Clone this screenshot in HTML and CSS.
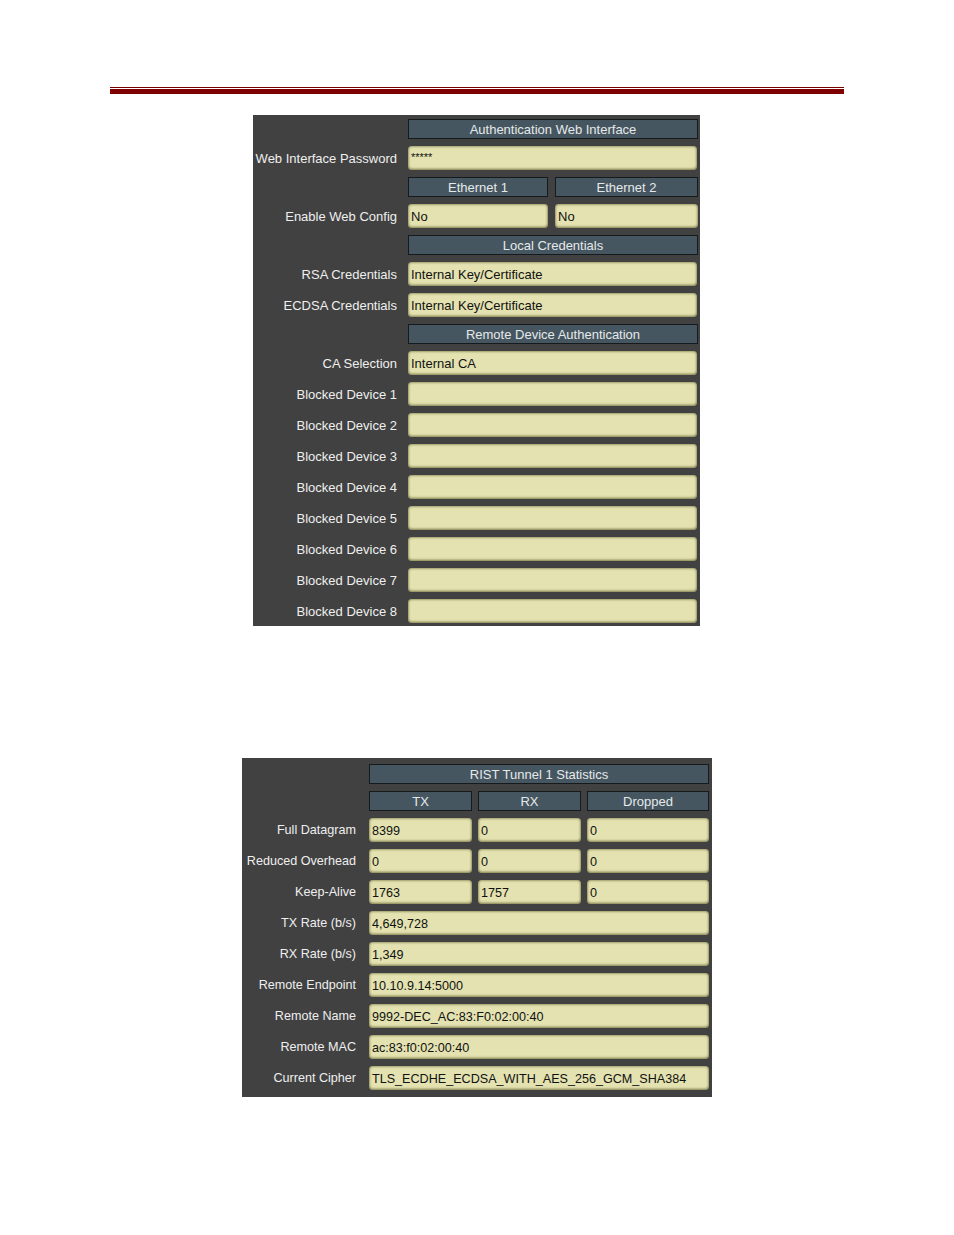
FILE: index.html
```html
<!DOCTYPE html>
<html>
<head>
  <meta charset="utf-8">
  <link rel="stylesheet" href="styles.css">
</head>
<body>
  <div class="rule">
    <div class="rule-thin"></div>
    <div class="rule-thick"></div>
  </div>

  <div class="panel auth">
    <div class="bar wide">Authentication Web Interface</div>

    <div class="label">Web Interface Password</div>
    <div class="field wide pw">*****</div>

    <div class="bar first">Ethernet 1</div>
    <div class="bar">Ethernet 2</div>

    <div class="label">Enable Web Config</div>
    <div class="field">No</div>
    <div class="field">No</div>

    <div class="bar wide">Local Credentials</div>

    <div class="label">RSA Credentials</div>
    <div class="field wide">Internal Key/Certificate</div>
    <div class="label">ECDSA Credentials</div>
    <div class="field wide">Internal Key/Certificate</div>

    <div class="bar wide">Remote Device Authentication</div>

    <div class="label">CA Selection</div>
    <div class="field wide">Internal CA</div>
    <div class="label">Blocked Device 1</div>
    <div class="field wide"></div>
    <div class="label">Blocked Device 2</div>
    <div class="field wide"></div>
    <div class="label">Blocked Device 3</div>
    <div class="field wide"></div>
    <div class="label">Blocked Device 4</div>
    <div class="field wide"></div>
    <div class="label">Blocked Device 5</div>
    <div class="field wide"></div>
    <div class="label">Blocked Device 6</div>
    <div class="field wide"></div>
    <div class="label">Blocked Device 7</div>
    <div class="field wide"></div>
    <div class="label">Blocked Device 8</div>
    <div class="field wide"></div>
  </div>

  <div class="panel stats">
    <div class="bar wide">RIST Tunnel 1 Statistics</div>

    <div class="bar first">TX</div>
    <div class="bar">RX</div>
    <div class="bar">Dropped</div>

    <div class="label">Full Datagram</div>
    <div class="field">8399</div>
    <div class="field">0</div>
    <div class="field">0</div>

    <div class="label">Reduced Overhead</div>
    <div class="field">0</div>
    <div class="field">0</div>
    <div class="field">0</div>

    <div class="label">Keep-Alive</div>
    <div class="field">1763</div>
    <div class="field">1757</div>
    <div class="field">0</div>

    <div class="label">TX Rate (b/s)</div>
    <div class="field wide">4,649,728</div>
    <div class="label">RX Rate (b/s)</div>
    <div class="field wide">1,349</div>
    <div class="label">Remote Endpoint</div>
    <div class="field wide">10.10.9.14:5000</div>
    <div class="label">Remote Name</div>
    <div class="field wide">9992-DEC_AC:83:F0:02:00:40</div>
    <div class="label">Remote MAC</div>
    <div class="field wide">ac:83:f0:02:00:40</div>
    <div class="label">Current Cipher</div>
    <div class="field wide">TLS_ECDHE_ECDSA_WITH_AES_256_GCM_SHA384</div>
  </div>
</body>
</html>
```

FILE: styles.css
```css
* {
  margin: 0;
  padding: 0;
  box-sizing: border-box;
}

body {
  width: 954px;
  min-height: 1235px;
  background: #ffffff;
  font-family: 'Liberation Sans', Arial, sans-serif;
  font-size: 13px;
}

/* Page header rule */
.rule {
  width: 734px;
  margin: 87px 0 0 110px;
}

.rule-thin {
  height: 1px;
  background: #7a0000;
}

.rule-thick {
  height: 5px;
  margin-top: 1px;
  background: #800000;
}

/* Dark settings panels */
.panel {
  display: grid;
  background: #414141;
  row-gap: 7px;
}

.auth {
  width: 447px;
  margin: 21px 0 0 253px;
  padding: 4px 2px 3px 0;
  grid-template-columns: 148px 140px 143px;
  column-gap: 7px;
}

.stats {
  width: 470px;
  margin: 132px 0 0 242px;
  padding: 6px 3px 7px 0;
  grid-template-columns: 121px 103px 103px 122px;
  column-gap: 6px;
  font-size: 12.6px;
}

.bar {
  height: 20px;
  padding-top: 1px;
  line-height: 18px;
  background: #455660;
  border: 1px solid #151a1d;
  color: #e6e9ea;
  font-size: 13px;
  text-align: center;
}

.bar.first {
  grid-column: 2;
}

.auth .bar.wide {
  grid-column: 2 / 4;
}

.stats .bar.wide {
  grid-column: 2 / 5;
}

.label {
  grid-column: 1;
  height: 24px;
  padding: 1px 4px 0 0;
  line-height: 23px;
  text-align: right;
  color: #efefef;
  white-space: nowrap;
}

.stats .label {
  padding-right: 7px;
}

.field {
  height: 24px;
  padding: 2px 0 0 3px;
  line-height: 22px;
  background: #e3e2b0;
  border-radius: 4px;
  box-shadow:
    inset 0 0 2px 1px rgba(90, 88, 40, 0.5),
    inset 0 -2px 2px rgba(90, 88, 40, 0.22);
  color: #111;
  white-space: nowrap;
  overflow: hidden;
}

.auth .field.wide {
  grid-column: 2 / 4;
  margin-right: 1px;
}

.stats .field.wide {
  grid-column: 2 / 5;
}

.field.pw {
  font-size: 11px;
  line-height: 18px;
}
```
